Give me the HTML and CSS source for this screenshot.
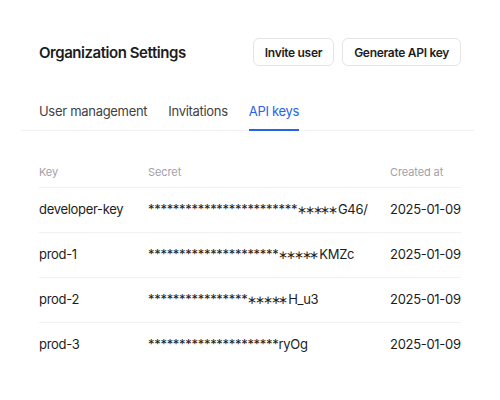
FILE: index.html
```html
<!DOCTYPE html>
<html lang="en">
<head>
<meta charset="utf-8">
<title>Organization Settings</title>
<link rel="stylesheet" href="styles.css">
</head>
<body>
<div class="page">
  <header class="header">
    <h1 class="title">Organization Settings</h1>
    <div class="actions">
      <button class="btn">Invite user</button>
      <button class="btn">Generate API key</button>
    </div>
  </header>
  <nav class="tabs">
    <a class="tab">User management</a>
    <a class="tab">Invitations</a>
    <a class="tab active">API keys</a>
  </nav>
  <div class="table">
    <div class="row head">
      <div class="cell">Key</div>
      <div class="cell">Secret</div>
      <div class="cell">Created at</div>
    </div>
    <div class="row">
      <div class="cell">developer-key</div>
      <div class="cell">************************<span class="big">∗∗∗∗∗</span>G46/</div>
      <div class="cell">2025-01-09</div>
    </div>
    <div class="row">
      <div class="cell">prod-1</div>
      <div class="cell">*********************<span class="big">∗∗∗∗∗</span>KMZc</div>
      <div class="cell">2025-01-09</div>
    </div>
    <div class="row">
      <div class="cell">prod-2</div>
      <div class="cell">****************<span class="big">∗∗∗∗∗</span>H_u3</div>
      <div class="cell">2025-01-09</div>
    </div>
    <div class="row last">
      <div class="cell">prod-3</div>
      <div class="cell">*********************ryOg</div>
      <div class="cell">2025-01-09</div>
    </div>
  </div>
</div>
</body>
</html>
```
FILE: styles.css
```css
* { box-sizing: border-box; }
html, body { margin: 0; background: #fff; }
body {
  font-family: Inter, "Noto Sans", sans-serif;
  color: #1c1c22;
  width: 500px;
  height: 400px;
  overflow: hidden;
}
.page {
  margin-left: 21px;
  width: 453px;
  padding-top: 38px;
}
.header {
  display: flex;
  align-items: center;
  justify-content: space-between;
  padding: 0 13px 0 18px;
}
.title {
  margin: 0;
  font-size: 15px;
  font-weight: 600;
  letter-spacing: -0.45px;
}
.actions {
  display: flex;
  gap: 8px;
}
.btn {
  font-family: inherit;
  font-size: 12px;
  font-weight: 600;
  letter-spacing: -0.3px;
  color: #1c1c22;
  background: #fff;
  border: 1px solid #e4e4e7;
  border-radius: 6px;
  height: 28px;
  padding: 0 11px;
}
.tabs {
  margin-top: 35px;
  display: flex;
  gap: 21px;
  padding-left: 18px;
  border-bottom: 1px solid #f1f1f3;
}
.tab {
  font-size: 13px;
  letter-spacing: -0.3px;
  line-height: 20px;
  color: #3f3f46;
  padding-bottom: 8px;
  border-bottom: 2px solid transparent;
  margin-bottom: -1px;
}
.tab.active {
  color: #2563eb;
  border-bottom-color: #2563eb;
}
.table {
  margin: 31px 13px 0 18px;
}
.row {
  display: grid;
  grid-template-columns: 109px 1fr 71px;
  white-space: nowrap;
  border-bottom: 1px solid #f1f1f3;
  font-size: 13px;
  letter-spacing: -0.3px;
  line-height: 20px;
  padding: 11px 0 12px;
}
.row.head {
  padding: 0 0 5px;
  font-size: 11px;
  letter-spacing: -0.1px;
  color: #a1a1aa;
}
.row.last { border-bottom: none; }
.big {
  font-size: 12px;
  letter-spacing: -2.3px;
  margin-right: 2.3px;
}
```
